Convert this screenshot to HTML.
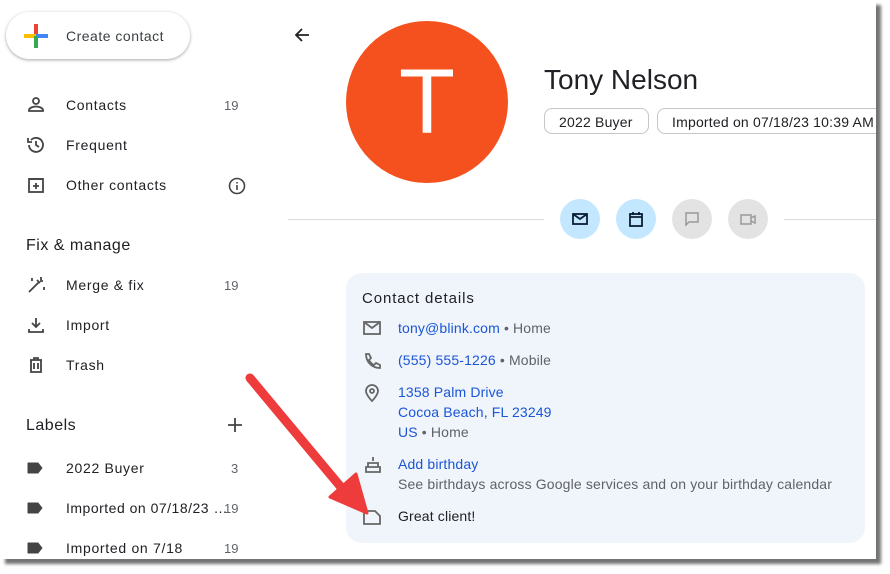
<!DOCTYPE html>
<html><head><style>
body{margin:0;width:890px;height:574px;background:#fff;position:relative;overflow:hidden;font-family:"Liberation Sans",sans-serif;color:#202124}
.frame{position:absolute;left:0;top:0;width:876px;height:559px;background:#fff;box-shadow:5px 5px 3px rgba(0,0,0,.55);overflow:hidden}
.abs{position:absolute}
.nav{position:absolute;left:66px;font-size:14px;color:#202124;letter-spacing:.7px;white-space:nowrap}
.cnt{position:absolute;left:224px;font-size:13px;color:#5f6368}
.ic{position:absolute;left:26px}
.h{position:absolute;left:26px;font-size:16px;color:#202124;letter-spacing:.5px}
.chip{position:absolute;top:108px;height:26px;border:1px solid #c4c7c5;border-radius:8px;font-size:14px;line-height:26px;padding:0 14px;box-sizing:border-box;white-space:nowrap;letter-spacing:.2px}
.btn{position:absolute;top:199px;width:40px;height:40px;border-radius:50%}
.card{position:absolute;left:346px;top:273px;width:519px;height:270px;background:#f0f4fb;border-radius:16px}
.row{position:absolute;left:398px;font-size:14px;color:#5f6368;letter-spacing:.15px;white-space:nowrap}
.row a{color:#1a56d6;text-decoration:none}
</style></head><body>
<div class="frame">
<div class="abs" style="left:6px;top:12px;width:184px;height:47px;border-radius:24px;background:#fff;box-shadow:0 1px 3px rgba(0,0,0,.35)"></div>
<svg class="abs" style="left:24px;top:24px" width="24" height="24"><rect x="10" y="0" width="4" height="12" fill="#ea4335"/><rect x="0" y="10" width="12" height="4" fill="#fbbc04"/><rect x="12" y="10" width="12" height="4" fill="#4285f4"/><rect x="10" y="12" width="4" height="12" fill="#34a853"/></svg>
<div class="abs" style="left:66px;top:28px;font-size:14px;color:#3c4043;letter-spacing:.5px">Create contact</div>

<svg class="ic" style="top:95px" width="20" height="20" fill="none" stroke="#444" stroke-width="1.8"><circle cx="10" cy="6" r="3"/><path d="M3 16v-1c0-2 4-3.5 7-3.5s7 1.5 7 3.5v1z"/></svg>
<div class="nav" style="top:97px">Contacts</div><div class="cnt" style="top:98px">19</div>
<svg class="ic" style="top:135px" width="20" height="20" fill="none" stroke="#444" stroke-width="1.8"><path d="M3 10a7 7 0 1 0 2-5M2 3v4h4M10 6v4l3 2"/></svg>
<div class="nav" style="top:137px">Frequent</div>
<svg class="ic" style="top:175px" width="20" height="20" fill="none" stroke="#444" stroke-width="1.8"><rect x="3" y="4" width="14" height="13"/><path d="M3 4h14M10 8v6M7 11h6"/></svg>
<div class="nav" style="top:177px">Other contacts</div>
<svg class="abs" style="left:227px;top:176px" width="20" height="20" fill="none" stroke="#444" stroke-width="1.6"><circle cx="10" cy="10" r="7.5"/><path d="M10 9v5M10 6v1.5"/></svg>

<div class="h" style="top:237px">Fix &amp; manage</div>
<svg class="ic" style="top:275px" width="20" height="20" fill="none" stroke="#444" stroke-width="1.8"><path d="M3 17L13 7M11 5l3 3M15 2v3M17 6h-3M6 3v3M18 12v3"/></svg>
<div class="nav" style="top:277px">Merge &amp; fix</div><div class="cnt" style="top:278px">19</div>
<svg class="ic" style="top:315px" width="20" height="20" fill="none" stroke="#444" stroke-width="1.8"><path d="M10 3v9M6 8l4 4 4-4M3 14v3h14v-3"/></svg>
<div class="nav" style="top:317px">Import</div>
<svg class="ic" style="top:355px" width="20" height="20" fill="none" stroke="#444" stroke-width="1.8"><path d="M4 5h12M8 5V3h4v2M5 5v12h10V5M8 8v6M12 8v6"/></svg>
<div class="nav" style="top:357px">Trash</div>

<div class="h" style="top:417px">Labels</div>
<svg class="abs" style="left:226px;top:416px" width="18" height="18" stroke="#444" stroke-width="1.8"><path d="M9 2v14M2 9h14"/></svg>
<svg class="ic" style="top:462px" width="18" height="12"><path d="M2 1h10l4 5-4 5H2z" fill="#444" stroke="#444" stroke-linejoin="round"/></svg>
<div class="nav" style="top:460px">2022 Buyer</div><div class="cnt" style="top:461px;left:231px">3</div>
<svg class="ic" style="top:502px" width="18" height="12"><path d="M2 1h10l4 5-4 5H2z" fill="#444" stroke="#444" stroke-linejoin="round"/></svg>
<div class="nav" style="top:500px;letter-spacing:.5px">Imported on 07/18/23 …</div><div class="cnt" style="top:501px">19</div>
<svg class="ic" style="top:542px" width="18" height="12"><path d="M2 1h10l4 5-4 5H2z" fill="#444" stroke="#444" stroke-linejoin="round"/></svg>
<div class="nav" style="top:540px">Imported on 7/18</div><div class="cnt" style="top:541px">19</div>

<svg class="abs" style="left:293px;top:26px" width="18" height="18" fill="none" stroke="#202124" stroke-width="1.8"><path d="M16 9H3M9 3L3 9l6 6"/></svg>
<div class="abs" style="left:346px;top:21px;width:162px;height:162px;border-radius:50%;background:#f4511e;color:#fff;font-size:92px;line-height:162px;text-align:center">T</div>
<div class="abs" style="left:544px;top:64px;font-size:28px;color:#202124">Tony Nelson</div>
<div class="chip" style="left:544px;width:105px">2022 Buyer</div>
<div class="chip" style="left:657px;width:240px">Imported on 07/18/23 10:39 AM</div>

<div class="abs" style="left:288px;top:219px;width:256px;height:1px;background:#dadce0"></div>
<div class="abs" style="left:784px;top:219px;width:92px;height:1px;background:#dadce0"></div>
<div class="btn" style="left:560px;background:#c2e7ff"></div>
<svg class="abs" style="left:571px;top:210px" width="18" height="18" fill="none" stroke="#0b1f33" stroke-width="1.8"><rect x="2" y="4" width="14" height="10"/><path d="M2 4l7 5 7-5"/></svg>
<div class="btn" style="left:616px;background:#c2e7ff"></div>
<svg class="abs" style="left:627px;top:210px" width="18" height="18" fill="none" stroke="#0b1f33" stroke-width="1.8"><rect x="3" y="4" width="12" height="12"/><path d="M3 7h12M6 2v3M12 2v3" /></svg>
<div class="btn" style="left:672px;background:#e3e3e3"></div>
<svg class="abs" style="left:683px;top:210px" width="18" height="18" fill="none" stroke="#9a9a9a" stroke-width="1.5"><path d="M3 3h12v9H6l-3 3z"/></svg>
<div class="btn" style="left:728px;background:#e3e3e3"></div>
<svg class="abs" style="left:739px;top:210px" width="18" height="18" fill="none" stroke="#9a9a9a" stroke-width="1.5"><rect x="2" y="5" width="10" height="9"/><path d="M12 8l4-2v7l-4-2"/></svg>

<div class="card"></div>
<div class="abs" style="left:362px;top:290px;font-size:15px;color:#202124;letter-spacing:.9px">Contact details</div>
<svg class="abs" style="left:362px;top:319px" width="20" height="18" fill="none" stroke="#666" stroke-width="1.8"><rect x="2" y="3" width="16" height="12"/><path d="M2 3l8 6 8-6"/></svg>
<div class="row" style="top:320px"><a>tony@blink.com</a> • Home</div>
<svg class="abs" style="left:363px;top:351px" width="20" height="20" fill="none" stroke="#666" stroke-width="1.8"><path d="M3 3h3l2 4-2 2c1 2 3 4 5 5l2-2 4 2v3c-8 0-14-6-14-14z"/></svg>
<div class="row" style="top:352px"><a>(555) 555-1226</a> • Mobile</div>
<svg class="abs" style="left:364px;top:383px" width="16" height="20" fill="none" stroke="#666" stroke-width="1.8"><path d="M8 18s-6-6-6-10a6 6 0 0 1 12 0c0 4-6 10-6 10z"/><circle cx="8" cy="8" r="2"/></svg>
<div class="row" style="top:384px"><a>1358 Palm Drive</a></div>
<div class="row" style="top:404px"><a>Cocoa Beach, FL 23249</a></div>
<div class="row" style="top:424px"><a>US</a> • Home</div>
<svg class="abs" style="left:363px;top:455px" width="20" height="20" fill="none" stroke="#666" stroke-width="1.8"><path d="M10 2v4M5 8h10v4H5zM3 12h14v5H3z"/></svg>
<div class="row" style="top:456px"><a>Add birthday</a></div>
<div class="row" style="top:476px">See birthdays across Google services and on your birthday calendar</div>
<svg class="abs" style="left:362px;top:507px" width="20" height="20" fill="none" stroke="#666" stroke-width="1.8"><path d="M2 4h11l5 5v8H2z"/></svg>
<div class="row" style="top:508px;color:#202124">Great client!</div>

<svg class="abs" style="left:0;top:0" width="876" height="559"><line x1="250" y1="378" x2="345" y2="492" stroke="#ee3b3b" stroke-width="9" stroke-linecap="round"/><path d="M330 497L367 513L356 474z" fill="#ee3b3b" stroke="#ee3b3b" stroke-width="3" stroke-linejoin="round"/></svg>
</div>
</body></html>
